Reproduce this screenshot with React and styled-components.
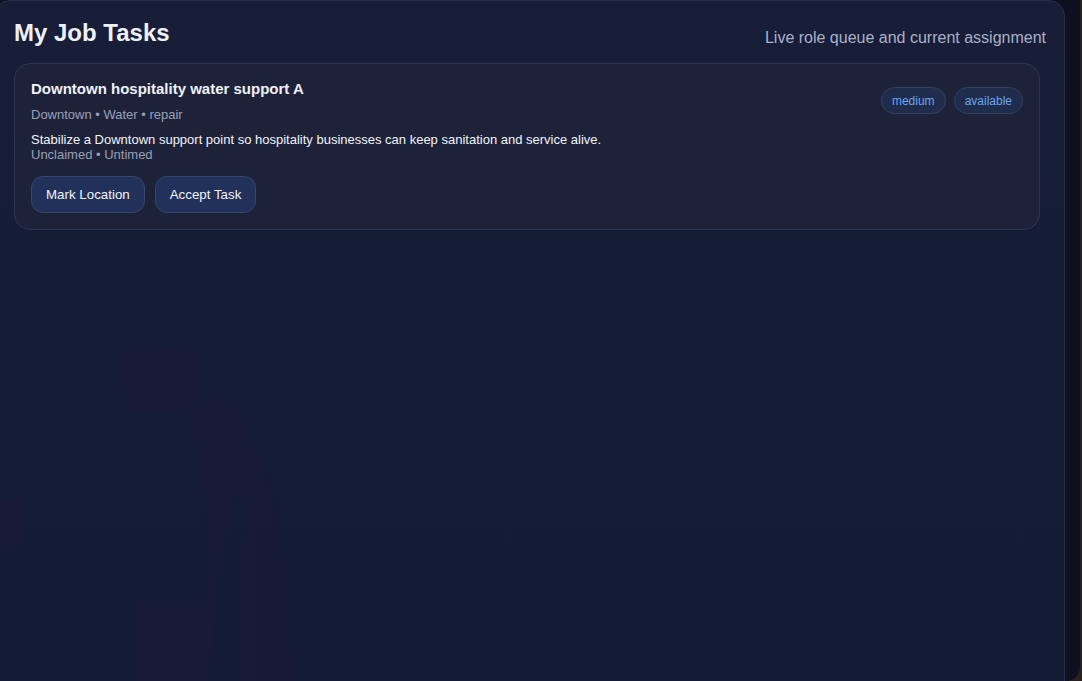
import React from "react";
import styled, { createGlobalStyle } from "styled-components";

const Global = createGlobalStyle`
  html, body { margin: 0; padding: 0; background: #2a211f; overflow: hidden; }
  body { font-family: "Liberation Sans", Arial, sans-serif; }
`;

const Shell = styled.div`
  width: 1080px;
  height: 681px;
  background: #0d111d;
  border-bottom-right-radius: 14px;
  overflow: hidden;
`;

const Panel = styled.section`
  position: relative;
  box-sizing: border-box;
  margin-left: -6px;
  width: 1071px;
  height: 720px;
  padding: 16px 18px 0 19px;
  background: linear-gradient(180deg, #181e38 0%, #151c35 40%, #141b34 100%);
  border: 1px solid #262d45;
  border-radius: 16px;
  overflow: hidden;
`;

const Backdrop = styled.svg`
  position: absolute;
  left: 0;
  top: 300px;
  width: 420px;
  height: 420px;
  pointer-events: none;
`;

const Header = styled.header`
  position: relative;
  display: flex;
  justify-content: space-between;
  align-items: flex-end;
  margin-bottom: 14px;
`;

const Title = styled.h2`
  margin: 0;
  font-size: 24px;
  font-weight: 700;
  color: #eef1fa;
  line-height: 32px;
`;

const Subtitle = styled.span`
  font-size: 16px;
  color: #a9b1c9;
  line-height: 24px;
  margin-bottom: -1px;
`;

const Card = styled.article`
  position: relative;
  box-sizing: border-box;
  width: 1026px;
  padding: 16px 16px 16px 16px;
  background: #1e2239;
  border: 1px solid #2f3550;
  border-radius: 16px;
`;

const CardTop = styled.div`
  display: flex;
  justify-content: space-between;
  align-items: flex-start;
`;

const CardTitle = styled.h3`
  margin: 0;
  font-size: 15px;
  font-weight: 700;
  color: #eef1fa;
  line-height: 18px;
`;

const Meta = styled.div`
  margin-top: 9px;
  font-size: 13px;
  line-height: 16px;
  color: #98a0b8;
`;

const Desc = styled.div`
  margin-top: 9px;
  font-size: 13px;
  line-height: 15px;
  color: #f1f3f9;
`;

const Sub = styled.div`
  font-size: 13px;
  line-height: 15px;
  color: #98a0b8;
`;

const Chips = styled.div`
  display: flex;
  gap: 8px;
  margin-top: 7px;
`;

const Chip = styled.span`
  display: inline-flex;
  align-items: center;
  height: 27px;
  box-sizing: border-box;
  padding: 0 10px;
  border-radius: 999px;
  background: #1f2c4c;
  border: 1px solid #33415f;
  color: #6aa5ee;
  font-size: 12px;
`;

const Actions = styled.div`
  display: flex;
  gap: 10px;
  margin-top: 14px;
`;

const Button = styled.button`
  height: 37px;
  padding: 0 14px;
  border-radius: 12px;
  background: #22315a;
  border: 1px solid #36466f;
  color: #f1f3fa;
  font-family: "Liberation Sans", Arial, sans-serif;
  font-size: 13.333px;
  cursor: pointer;
`;

export default function App() {
  return (
    <>
      <Global />
      <Shell>
        <Panel>
          <Backdrop viewBox="0 0 420 420">
            <g fill="#191b36" opacity="0.6">
              <path d="M128 50 L200 45 L205 110 L218 95 L240 100 L275 180 L290 260 L300 420 L240 420 L245 250 L258 220 L240 190 L225 260 L210 420 L140 420 L142 300 L210 300 L215 240 L210 195 L195 120 L190 110 L130 110 Z" />
              <path d="M0 200 L25 195 L28 245 L0 250 Z" />
            </g>
          </Backdrop>
          <Header>
            <Title>My Job Tasks</Title>
            <Subtitle>Live role queue and current assignment</Subtitle>
          </Header>
          <Card>
            <CardTop>
              <div>
                <CardTitle>Downtown hospitality water support A</CardTitle>
                <Meta>Downtown • Water • repair</Meta>
                <Desc>
                  Stabilize a Downtown support point so hospitality businesses can keep sanitation and service alive.
                </Desc>
                <Sub>Unclaimed • Untimed</Sub>
              </div>
              <Chips>
                <Chip>medium</Chip>
                <Chip>available</Chip>
              </Chips>
            </CardTop>
            <Actions>
              <Button>Mark Location</Button>
              <Button>Accept Task</Button>
            </Actions>
          </Card>
        </Panel>
      </Shell>
    </>
  );
}
